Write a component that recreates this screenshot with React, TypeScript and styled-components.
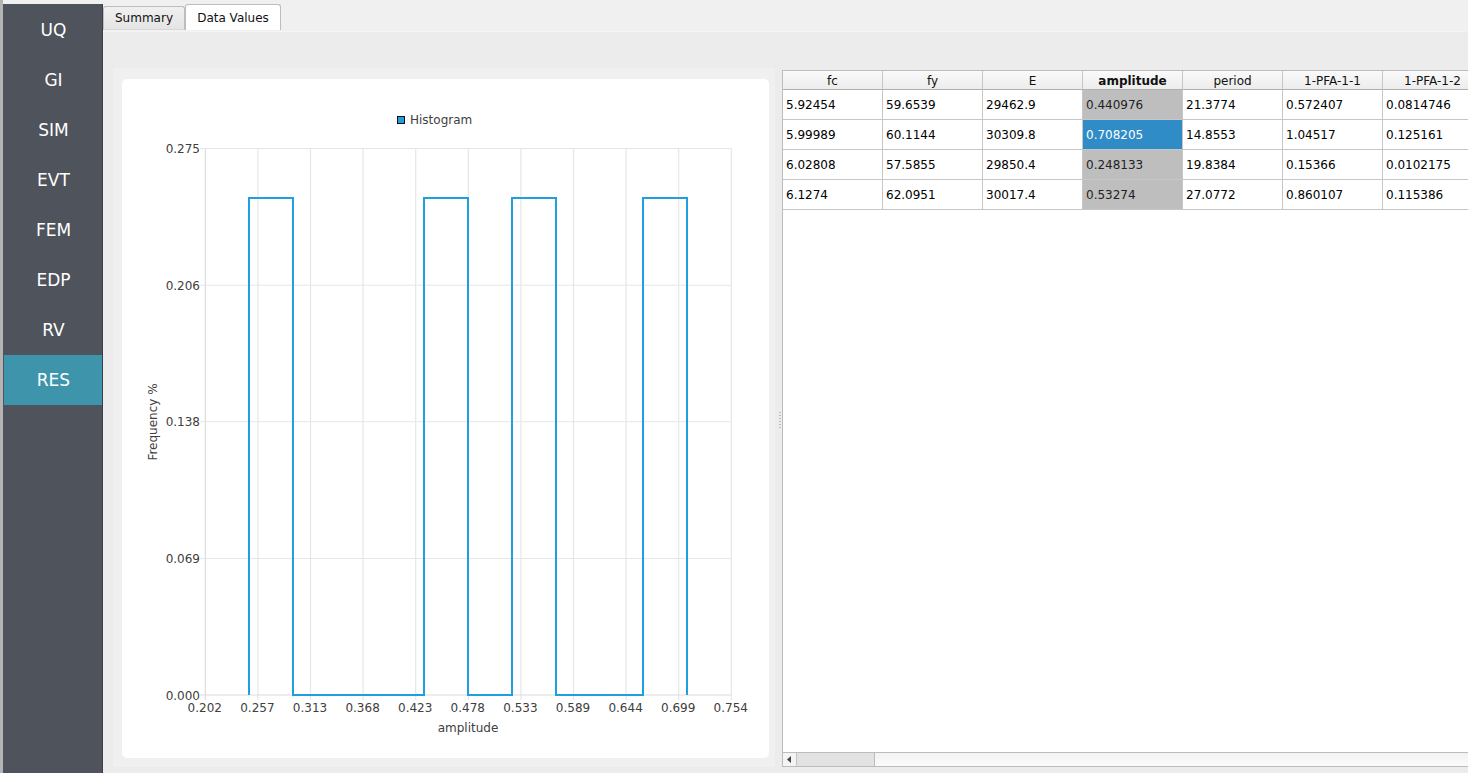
import React from "react";
import styled, { createGlobalStyle } from "styled-components";

const GlobalStyle = createGlobalStyle`
  html, body {
    margin: 0;
    width: 1468px;
    height: 773px;
    overflow: hidden;
    background: #f0f0f0;
    font-family: "DejaVu Sans", sans-serif;
  }
`;

const Window = styled.div`
  display: flex;
  width: 1468px;
  height: 773px;
  overflow: hidden;
  border-left: 3px solid #b4b4b4;
  box-sizing: border-box;
`;

const Sidebar = styled.nav`
  display: flex;
  flex-direction: column;
  flex: none;
  width: 100px;
  margin-top: 4px;
  padding: 1px 0 0 1px;
  box-sizing: border-box;
  background: #4f535b;
  border-right: 1px solid #3c3f46;
`;

const NavItem = styled.div<{ $active?: boolean }>`
  display: flex;
  align-items: center;
  justify-content: center;
  height: 50px;
  flex: none;
  padding-left: 1px;
  color: #fff;
  font-size: 17px;
  background: ${(p) => (p.$active ? "#3d94ab" : "transparent")};
`;

const Main = styled.div`
  display: flex;
  flex-direction: column;
  flex: 1;
  min-width: 0;
`;

const TabBar = styled.div`
  display: flex;
  align-items: flex-end;
  height: 31px;
  flex: none;
  box-sizing: border-box;
  padding-bottom: 1px;
`;

const Tab = styled.div<{ $active?: boolean }>`
  display: flex;
  align-items: center;
  justify-content: center;
  box-sizing: border-box;
  font-size: 12px;
  color: #111;
  border: 1px solid #bdbdbd;
  border-radius: 3px 3px 0 0;
  width: ${(p) => (p.$active ? "96px" : "82px")};
  height: ${(p) => (p.$active ? "26px" : "24px")};
  background: ${(p) => (p.$active ? "#fff" : "linear-gradient(#f0f0f0, #e4e4e4)")};
  border-bottom: ${(p) => (p.$active ? "none" : "1px solid #d8d8d8")};
`;

const Pane = styled.div`
  flex: 1;
  min-height: 0;
  background: #ececec;
  border-top: 1px solid #f4f4f4;
  padding: 36px 0 6px 10px;
  display: flex;
`;

const ChartPanel = styled.section`
  flex: none;
  width: 662px;
  box-sizing: border-box;
  background: #f0f0f0;
  padding: 11px 6px 9px 9px;
  display: flex;
`;

const ChartCard = styled.div`
  flex: 1;
  background: #fff;
  border-radius: 5px;
`;

const ChartSvg = styled.svg`
  display: block;
  width: 647px;
  height: 679px;
`;

const Splitter = styled.div`
  flex: none;
  width: 7px;
  position: relative;
  background: #ececec;
`;

const Grip = styled.span`
  position: absolute;
  left: 4px;
  top: 344px;
  width: 2px;
  height: 18px;
  background: repeating-linear-gradient(#b9b9b9 0 1px, transparent 1px 3px);
`;

const TablePanel = styled.section`
  flex: 1;
  min-width: 0;
  display: flex;
  flex-direction: column;
  margin-top: 2px;
  background: #fff;
  border: 1px solid #bcbcbc;
  border-right: none;
  overflow: hidden;
`;

const TableArea = styled.div`
  flex: 1;
  min-height: 0;
  overflow: hidden;
`;

const DataTable = styled.table`
  border-collapse: separate;
  border-spacing: 0;
  table-layout: fixed;
  width: 700px;
  font-size: 12px;
`;

const HeadCell = styled.th<{ $bold?: boolean }>`
  width: 100px;
  height: 19px;
  padding: 1px 0 0;
  box-sizing: border-box;
  font-weight: ${(p) => (p.$bold ? 700 : 400)};
  color: #111;
  text-align: center;
  background: linear-gradient(#fafafa, #ececec);
  border-right: 1px solid #c6c6c6;
  border-bottom: 1px solid #b0b0b0;
`;

const Cell = styled.td<{ $tone?: "grey" | "blue" }>`
  height: 30px;
  padding: 0 0 0 3px;
  box-sizing: border-box;
  overflow: hidden;
  white-space: nowrap;
  border-right: 1px solid #c6c6c6;
  border-bottom: 1px solid #c6c6c6;
  color: ${(p) => (p.$tone === "blue" ? "#fff" : p.$tone === "grey" ? "#222" : "#000")};
  background: ${(p) =>
    p.$tone === "blue" ? "#308cc6" : p.$tone === "grey" ? "#bebebe" : "#fff"};
`;

const ScrollBar = styled.div`
  flex: none;
  display: flex;
  height: 13px;
  border-top: 1px solid #bcbcbc;
  background: linear-gradient(#f2f2f2, #fbfbfb);
`;

const ScrollArrow = styled.div`
  flex: none;
  display: flex;
  align-items: center;
  justify-content: center;
  width: 14px;
  box-sizing: border-box;
  background: #f4f4f4;
  border-right: 1px solid #c4c4c4;
`;

const ScrollThumb = styled.div`
  flex: none;
  width: 78px;
  box-sizing: border-box;
  background: #e2e2e2;
  border-right: 1px solid #bcbcbc;
`;

const navItems = ["UQ", "GI", "SIM", "EVT", "FEM", "EDP", "RV", "RES"];
const columns = ["fc", "fy", "E", "amplitude", "period", "1-PFA-1-1", "1-PFA-1-2"];
const rows = [
  ["5.92454", "59.6539", "29462.9", "0.440976", "21.3774", "0.572407", "0.0814746"],
  ["5.99989", "60.1144", "30309.8", "0.708205", "14.8553", "1.04517", "0.125161"],
  ["6.02808", "57.5855", "29850.4", "0.248133", "19.8384", "0.15366", "0.0102175"],
  ["6.1274", "62.0951", "30017.4", "0.53274", "27.0772", "0.860107", "0.115386"],
];

const xLabels = ["0.202", "0.257", "0.313", "0.368", "0.423", "0.478", "0.533", "0.589", "0.644", "0.699", "0.754"];
const yLabels = [
  { y: 148.5, text: 153, label: "0.275" },
  { y: 285.25, text: 290, label: "0.206" },
  { y: 421.75, text: 426, label: "0.138" },
  { y: 558.5, text: 563, label: "0.069" },
  { y: 695, text: 700, label: "0.000" },
];
const histogram =
  "M249 695 V198 H293 V695 H424 V198 H468 V695 H512 V198 H556 V695 H643 V198 H687 V695";

const Chart: React.FC = () => (
  <ChartSvg viewBox="122 79 647 679" fontFamily="'DejaVu Sans', sans-serif" fontSize="12" fill="#404040">
    <rect x="397.5" y="116.5" width="7" height="7" fill="#209fdf" stroke="#111" />
    <text x="410" y="124">Histogram</text>
    {xLabels.map((label, i) => {
      const x = 205.3 + i * 52.6;
      return (
        <g key={label}>
          <line x1={x} x2={x} y1="148" y2="700" stroke={i === 0 ? "#dcdcdc" : "#e6e6e6"} strokeWidth="1.2" />
          <text x={x - 0.5} y="712" textAnchor="middle">{label}</text>
        </g>
      );
    })}
    {yLabels.map((t) => (
      <g key={t.label}>
        <line x1="200" x2="731" y1={t.y} y2={t.y} stroke={t.y === 695 ? "#dcdcdc" : "#e6e6e6"} strokeWidth="1.2" />
        <text x="200" y={t.text} textAnchor="end">{t.label}</text>
      </g>
    ))}
    <path d={histogram} fill="none" stroke="#209fdf" strokeWidth="2" />
    <text x="468" y="732" textAnchor="middle">amplitude</text>
    <text x="157" y="422" textAnchor="middle" transform="rotate(-90 157 422)">Frequency %</text>
  </ChartSvg>
);

const App: React.FC = () => (
  <>
    <GlobalStyle />
    <Window>
      <Sidebar>
        {navItems.map((item) => (
          <NavItem key={item} $active={item === "RES"}>{item}</NavItem>
        ))}
      </Sidebar>
      <Main>
        <TabBar>
          <Tab>Summary</Tab>
          <Tab $active>Data Values</Tab>
        </TabBar>
        <Pane>
          <ChartPanel>
            <ChartCard>
              <Chart />
            </ChartCard>
          </ChartPanel>
          <Splitter>
            <Grip />
          </Splitter>
          <TablePanel>
            <TableArea>
              <DataTable>
                <thead>
                  <tr>
                    {columns.map((c) => (
                      <HeadCell key={c} $bold={c === "amplitude"}>{c}</HeadCell>
                    ))}
                  </tr>
                </thead>
                <tbody>
                  {rows.map((row, r) => (
                    <tr key={row[0]}>
                      {row.map((value, i) => (
                        <Cell key={i} $tone={i === 3 ? (r === 1 ? "blue" : "grey") : undefined}>{value}</Cell>
                      ))}
                    </tr>
                  ))}
                </tbody>
              </DataTable>
            </TableArea>
            <ScrollBar>
              <ScrollArrow>
                <svg width="5" height="7" viewBox="0 0 5 7"><path d="M4 0 V7 L0 3.5 Z" fill="#444" /></svg>
              </ScrollArrow>
              <ScrollThumb />
            </ScrollBar>
          </TablePanel>
        </Pane>
      </Main>
    </Window>
  </>
);

export default App;
